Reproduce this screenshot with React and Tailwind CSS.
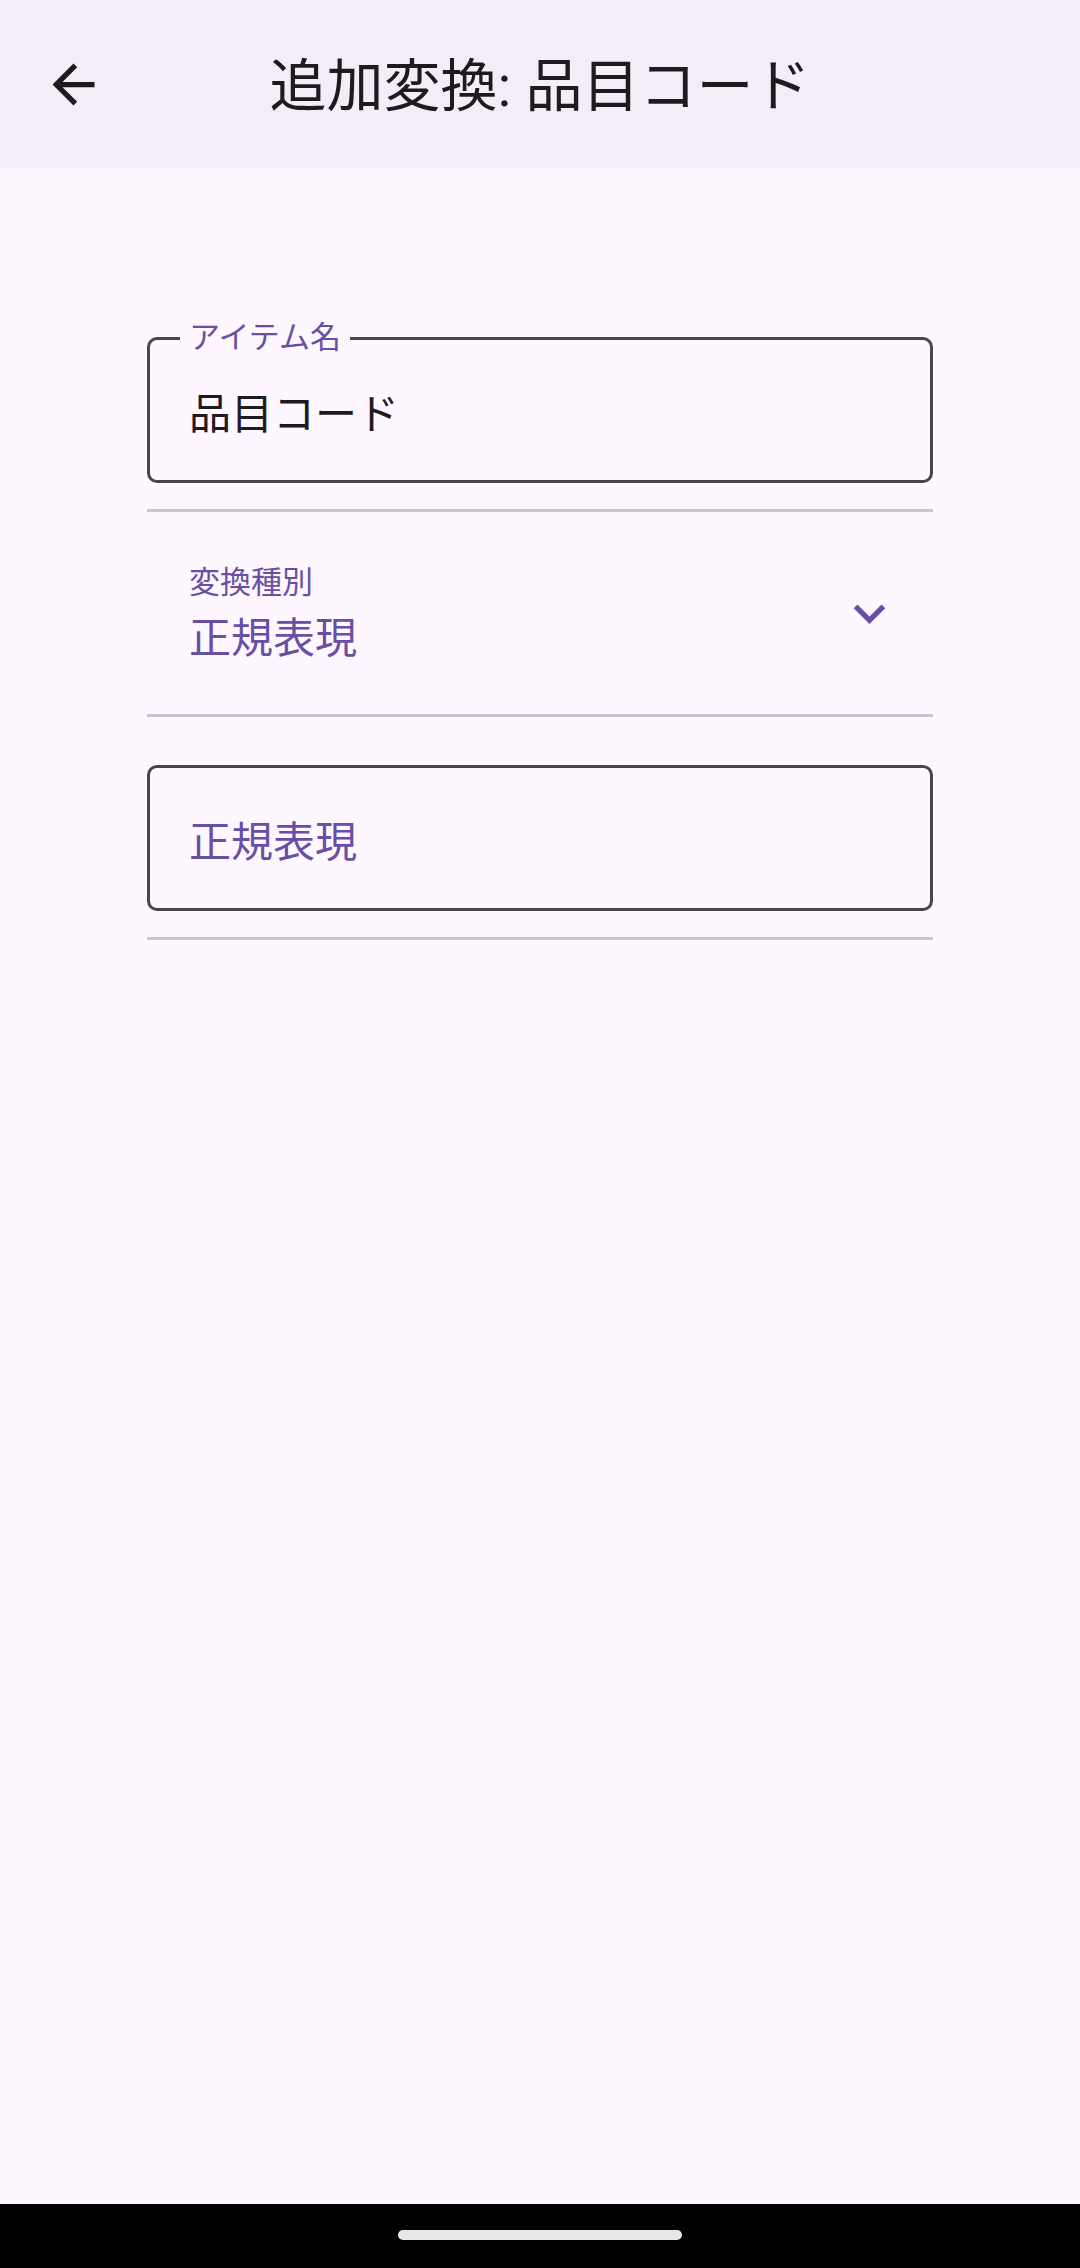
export default function App() {
  const font = { fontFamily: "Roboto, 'Noto Sans CJK JP', sans-serif" };
  return (
    <div className="w-[1080px] h-[2268px] flex flex-col bg-[#fef7ff]" style={font}>
      <header className="h-[168px] shrink-0 bg-[#f3edf7] grid grid-cols-[147px_1fr_147px] items-center">
        <div className="pl-[10px]">
          <button className="w-[126px] h-[126px] flex items-center justify-center">
            <svg width="63" height="63" viewBox="0 0 24 24" fill="#1d1b20">
              <path d="M20 11H7.83l5.59-5.59L12 4l-8 8 8 8 1.41-1.41L7.83 13H20v-2z" />
            </svg>
          </button>
        </div>
        <h1 className="text-center text-[57px] leading-[72px] text-[#1d1b20] font-normal whitespace-nowrap translate-y-[3px]">
          追加変換: 品目コード
        </h1>
        <div />
      </header>

      <main className="flex-1 flex flex-col items-center pt-[169px]">
        <div className="w-[786px] flex flex-col">
          <div className="relative h-[146px] border-[3px] border-[#49454f] rounded-[10px] flex items-center px-[39px]">
            <span className="absolute top-[-22px] left-[30px] px-[9px] bg-[#fef7ff] text-[31px] leading-[40px] text-[#6750a4]">
              アイテム名
            </span>
            <span className="block text-[42px] leading-[56px] text-[#1d1b20] translate-y-[5px]">品目コード</span>
          </div>
          <div className="mt-[26px] h-[3px] bg-[#cac4d0]" />

          <div className="h-[202px] flex items-center justify-between pl-[42px] pr-[32px]">
            <div className="flex flex-col gap-[8px] pt-[4px]">
              <span className="text-[31px] leading-[40px] text-[#6750a4]">変換種別</span>
              <span className="text-[42px] leading-[56px] text-[#6750a4]">正規表現</span>
            </div>
            <svg width="63" height="63" viewBox="0 0 24 24" fill="#6750a4">
              <path d="M16.59 8.59L12 13.17 7.41 8.59 6 10l6 6 6-6z" />
            </svg>
          </div>
          <div className="h-[3px] bg-[#cac4d0]" />

          <div className="mt-[48px] h-[146px] border-[3px] border-[#49454f] rounded-[10px] flex items-center px-[39px]">
            <span className="block text-[42px] leading-[56px] text-[#6750a4] translate-y-[5px]">正規表現</span>
          </div>
          <div className="mt-[26px] h-[3px] bg-[#cac4d0]" />
        </div>
      </main>

      <div className="h-[64px] shrink-0 bg-black flex items-center justify-center">
        <div className="w-[284px] h-[10px] rounded-full bg-[#e8e8e8] mt-[-2px]" />
      </div>
    </div>
  );
}
